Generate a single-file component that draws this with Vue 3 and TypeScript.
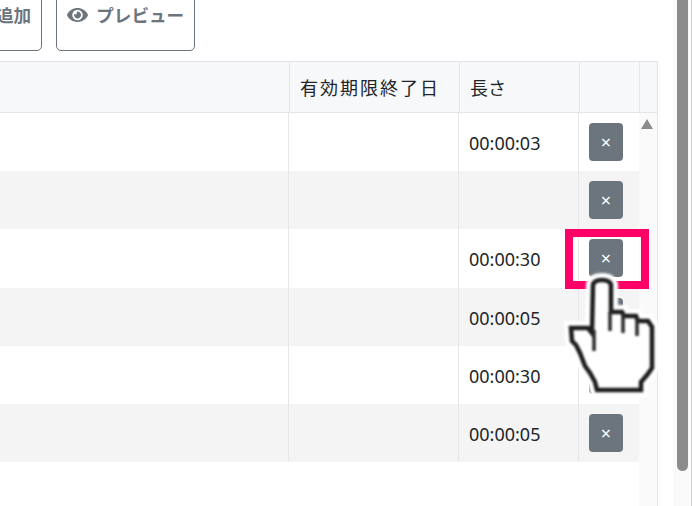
<script setup lang="ts">
const rows: string[] = ['00:00:03', '', '00:00:30', '00:00:05', '00:00:30', '00:00:05']
const handOutline =
  'M571 328 L588 328 L592 333 L593 285 Q594 280 602 280 Q610 280 611 285 L611 312 L622 312 L624 316 L636 316 L638 321 L648 321 L652 327 L652 368 L647 375 L641 382 L641 390 L597 390 L595 382 L590 373 L585 366 L580 353 L576 345 L572 341 Z'
</script>

<template>
  <div class="page">
    <main class="main">
      <div class="toolbar">
        <button class="btn add">追加</button>
        <button class="btn">
          <svg class="eye" viewBox="0 0 576 512" aria-hidden="true">
            <path fill="currentColor" d="M572.52 241.4C518.29 135.59 410.93 64 288 64S57.68 135.64 3.48 241.41a32.35 32.35 0 0 0 0 29.19C57.71 376.41 165.07 448 288 448s230.32-71.64 284.52-177.41a32.35 32.35 0 0 0 0-29.19zM288 400a144 144 0 1 1 144-144 143.93 143.93 0 0 1-144 144zm0-240a95.31 95.31 0 0 0-25.31 3.79 47.85 47.85 0 0 1-66.9 66.9A95.78 95.78 0 1 0 288 160z" />
          </svg>
          <span>プレビュー</span>
        </button>
      </div>

      <section class="table">
        <div class="thead">
          <div class="th c1"></div>
          <div class="th c2">有効期限終了日</div>
          <div class="th c3">長さ</div>
          <div class="th c4"></div>
          <div class="th c5"></div>
        </div>
        <div class="tbody">
          <div class="rows">
            <div v-for="(len, i) in rows" :key="i" class="tr">
              <div class="td c1"></div>
              <div class="td c2"></div>
              <div class="td c3"><span class="len">{{ len }}</span></div>
              <div class="td c4"><button class="del">×</button></div>
            </div>
          </div>
          <div class="track"><span class="arrow"></span></div>
        </div>
      </section>

      <div class="highlight"></div>
      <svg class="hand" viewBox="560 270 100 130" aria-hidden="true">
        <g stroke-linejoin="miter" stroke-linecap="butt">
          <path class="halo" :d="handOutline" />
          <path class="shape" :d="handOutline" />
          <path class="line" d="M594 330 L594 351 M610 312 L610 331 M623 314 L623 333 M637 318 L637 336" />
        </g>
      </svg>
    </main>

    <aside class="page-scroll"><div class="thumb"></div></aside>
    <div class="edge"></div>
  </div>
</template>

<style>
html, body { margin: 0; background: #fff; overflow: hidden; }
</style>

<style scoped>
.page {
  display: flex;
  width: 692px;
  height: 506px;
  overflow: hidden;
  background: #fff;
  font-family: "Noto Sans", "Noto Sans CJK JP", sans-serif;
  color: #212529;
}
.main {
  position: relative;
  flex: none;
  width: 673px;
}
.toolbar {
  display: flex;
  gap: 14px;
  height: 71px;
  margin: -20px 0 10px;
}
.btn {
  display: flex;
  align-items: flex-start;
  gap: 8px;
  height: 71px;
  padding: 23px 10px 0;
  border: 1px solid #6c757d;
  border-radius: 5px;
  background: #fff;
  color: #6c757d;
  font: 700 17.6px/22px "Noto Sans CJK JP", sans-serif;
  white-space: nowrap;
}
.add { margin-left: -15px; }
.eye { width: 21px; height: 22px; }
.table {
  width: 658px;
  border-top: 1px solid #e2e5ea;
}
.thead {
  display: flex;
  height: 50px;
  border-bottom: 1px solid #e2e5ea;
  background: #f7f8fa;
}
.th {
  flex: none;
  box-sizing: border-box;
  border-right: 1px solid #e2e5ea;
  padding-left: 10px;
  font: 400 18px/50px "Noto Sans CJK JP", sans-serif;
  white-space: nowrap;
}
.th.c1 { width: 290px; }
.th.c2 { width: 170px; letter-spacing: 2px; }
.th.c3 { width: 120px; }
.th.c4 { width: 60px; }
.th.c5 { width: 18px; padding: 0; }
.tbody {
  display: flex;
  height: 393px;
}
.rows { width: 639px; }
.tr {
  display: flex;
  height: 58.2px;
  background: #fff;
}
.tr:nth-child(even) { background: #f4f4f4; }
.td {
  flex: none;
  box-sizing: border-box;
  border-right: 1px solid #e4e6ea;
  font-size: 18px;
  line-height: 58.2px;
  padding: 0 10px;
}
.len {
  display: block;
  padding-top: 1px;
}
.td.c1 { width: 289px; }
.td.c2 { width: 170px; }
.td.c3 { width: 120px; }
.td.c4 { width: 60px; border-right: 0; display: flex; align-items: center; }
.del {
  width: 34px;
  height: 38px;
  padding: 0;
  border: 0;
  border-radius: 4px;
  background: #6c757d;
  color: #fff;
  font: 400 18px/38px "Noto Sans", sans-serif;
}
.track {
  position: relative;
  width: 19px;
  box-sizing: border-box;
  border-right: 1px solid #e2e5ea;
  background: #fafafa;
}
.arrow {
  position: absolute;
  left: 2px;
  top: 6px;
  width: 0;
  height: 0;
  border-left: 6.5px solid transparent;
  border-right: 6.5px solid transparent;
  border-bottom: 10px solid #8c8c8c;
}
.highlight {
  position: absolute;
  left: 565px;
  top: 229px;
  width: 84px;
  height: 60px;
  box-sizing: border-box;
  border: 8px solid #ff0066;
}
.hand {
  position: absolute;
  left: 560px;
  top: 270px;
  width: 100px;
  height: 130px;
  overflow: visible;
  filter: blur(0.9px);
}
.halo { fill: #fff; stroke: #fff; stroke-width: 14; }
.shape { fill: #fff; stroke: #1c1c1c; stroke-width: 4.5; }
.line { fill: none; stroke: #2a2a2a; stroke-width: 3.5; }
.page-scroll {
  flex: none;
  width: 17px;
  background: #fafafa;
}
.thumb {
  width: 11px;
  height: 471px;
  margin-left: 4px;
  border-radius: 0 0 6px 6px;
  background: #8c8c8c;
}
.edge {
  flex: none;
  width: 1px;
  margin-left: 1px;
  background: #cfcfcf;
}
</style>
